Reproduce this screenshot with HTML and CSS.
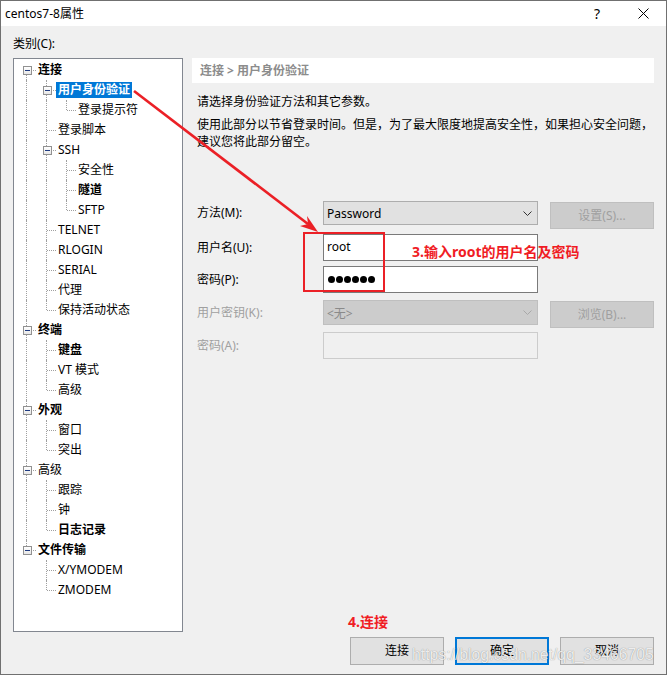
FILE: index.html
```html
<!DOCTYPE html>
<html>
<head>
    <meta charset="UTF-8">
    <title>centos7-8属性</title>
    <link rel="stylesheet" href="styles.css">
</head>
<body>
<div class="window">
    <div class="titlebar">
        <span class="title">centos7-8属性</span>
        <span class="tb-btn help">?</span>
        <span class="tb-btn">
            <svg width="11" height="11" viewBox="0 0 11 11"><path d="M0.5 0.5 L10.5 10.5 M10.5 0.5 L0.5 10.5" stroke="#000" stroke-width="1" fill="none"/></svg>
        </span>
    </div>

    <div class="main">
        <div class="left">
            <div class="cat-label">类别(C):</div>
            <div class="tree">
                <div class="r"><i class="s"><b class="box"></b></i><span class="bd">连接</span></div>
                <div class="r"><i class="p"></i><i class="t"><b class="box"></b></i><span class="bd sel">用户身份验证</span></div>
                <div class="r"><i class="p"></i><i class="p"></i><i class="e"></i><span>登录提示符</span></div>
                <div class="r"><i class="p"></i><i class="t"></i><span>登录脚本</span></div>
                <div class="r"><i class="p"></i><i class="t"><b class="box"></b></i><span>SSH</span></div>
                <div class="r"><i class="p"></i><i class="p"></i><i class="t"></i><span>安全性</span></div>
                <div class="r"><i class="p"></i><i class="p"></i><i class="t"></i><span class="bd">隧道</span></div>
                <div class="r"><i class="p"></i><i class="p"></i><i class="e"></i><span>SFTP</span></div>
                <div class="r"><i class="p"></i><i class="t"></i><span>TELNET</span></div>
                <div class="r"><i class="p"></i><i class="t"></i><span>RLOGIN</span></div>
                <div class="r"><i class="p"></i><i class="t"></i><span>SERIAL</span></div>
                <div class="r"><i class="p"></i><i class="t"></i><span>代理</span></div>
                <div class="r"><i class="p"></i><i class="e"></i><span>保持活动状态</span></div>
                <div class="r"><i class="t"><b class="box"></b></i><span class="bd">终端</span></div>
                <div class="r"><i class="p"></i><i class="t"></i><span class="bd">键盘</span></div>
                <div class="r"><i class="p"></i><i class="t"></i><span>VT 模式</span></div>
                <div class="r"><i class="p"></i><i class="e"></i><span>高级</span></div>
                <div class="r"><i class="t"><b class="box"></b></i><span class="bd">外观</span></div>
                <div class="r"><i class="p"></i><i class="t"></i><span>窗口</span></div>
                <div class="r"><i class="p"></i><i class="e"></i><span>突出</span></div>
                <div class="r"><i class="t"><b class="box"></b></i><span>高级</span></div>
                <div class="r"><i class="p"></i><i class="t"></i><span>跟踪</span></div>
                <div class="r"><i class="p"></i><i class="t"></i><span>钟</span></div>
                <div class="r"><i class="p"></i><i class="e"></i><span class="bd">日志记录</span></div>
                <div class="r"><i class="e"><b class="box"></b></i><span class="bd">文件传输</span></div>
                <div class="r"><i></i><i class="t"></i><span>X/YMODEM</span></div>
                <div class="r"><i></i><i class="e"></i><span>ZMODEM</span></div>
            </div>
        </div>

        <div class="right">
            <div class="crumb">连接 &gt; 用户身份验证</div>
            <div class="desc">
                <p class="first">请选择身份验证方法和其它参数。</p>
                <p>使用此部分以节省登录时间。但是，为了最大限度地提高安全性，如果担心安全问题，建议您将此部分留空。</p>
            </div>

            <div class="form">
                <div class="row row1">
                    <label class="h24">方法(M):</label>
                    <div class="combo">
                        <span>Password</span>
                        <svg width="9" height="5" viewBox="0 0 9 5"><path d="M0.5 0.5 L4.5 4.5 L8.5 0.5" stroke="#333" fill="none"/></svg>
                    </div>
                    <div class="side-btn">设置(S)...</div>
                </div>
                <div class="row row2">
                    <label class="h27">用户名(U):</label>
                    <div class="field">root</div>
                </div>
                <div class="row row3">
                    <label class="h27">密码(P):</label>
                    <div class="field dots"><i></i><i></i><i></i><i></i><i></i><i></i></div>
                </div>
                <div class="row row4">
                    <label class="h25 off">用户密钥(K):</label>
                    <div class="combo off">
                        <span>&lt;无&gt;</span>
                        <svg width="9" height="5" viewBox="0 0 9 5"><path d="M0.5 0.5 L4.5 4.5 L8.5 0.5" stroke="#a8a8a8" fill="none"/></svg>
                    </div>
                    <div class="side-btn">浏览(B)...</div>
                </div>
                <div class="row row5">
                    <label class="h27 off">密码(A):</label>
                    <div class="field off"></div>
                </div>
            </div>
        </div>
    </div>

    <div class="footer">
        <div class="btn">连接</div>
        <div class="btn default">确定</div>
        <div class="btn">取消</div>
    </div>

    <!-- 标注 -->
    <svg class="marks" width="667" height="675" viewBox="0 0 667 675">
        <path d="M134 91 L308 224" stroke="#eb2026" stroke-width="2.6" fill="none"/>
        <path d="M318 232 L300 226 L308 224 L307 216 Z" fill="#eb2026"/>
        <rect x="304" y="233" width="80" height="58" stroke="#eb2026" stroke-width="2" fill="none"/>
    </svg>
    <div class="note note3">3.输入root的用户名及密码</div>
    <div class="note note4">4.连接</div>
    <div class="watermark">https://blog.csdn.net/qq_33466705</div>
</div>
</body>
</html>
```

FILE: styles.css
```css
body {
    margin: 0;
    background: #fff;
    font-family: "Noto Sans", "Noto Sans CJK SC", sans-serif;
    font-size: 12px;
    color: #000;
}
.window {
    position: relative;
    width: 667px;
    height: 675px;
    box-sizing: border-box;
    border: 1px solid #707070;
    background: #f0f0f0;
    overflow: hidden;
}
.titlebar {
    height: 25px;
    background: #fff;
    display: flex;
    align-items: center;
}
.title {
    flex: 1;
    padding-left: 4px;
    line-height: 25px;
}
.tb-btn {
    width: 46px;
    height: 25px;
    display: flex;
    align-items: center;
    justify-content: center;
}
.help {
    font-size: 14px;
}

.main {
    display: flex;
    gap: 9px;
    padding: 0 12px;
}
.left {
    width: 170px;
    flex: none;
}
.cat-label {
    margin: 10px 0 6px;
    line-height: 16px;
}
.tree {
    width: 170px;
    height: 574px;
    box-sizing: border-box;
    border: 1px solid #828790;
    background: #fff;
    padding: 1px 0 0 2px;
}
.tree .r {
    display: flex;
    align-items: center;
    height: 20px;
}
.r i {
    position: relative;
    flex: none;
    width: 20px;
    height: 20px;
}
.r i.p::before,
.r i.t::before,
.r i.e::before,
.r i.s::before {
    content: "";
    position: absolute;
    left: 10px;
    top: 0;
    bottom: 0;
    border-left: 1px dotted #a0a0a0;
}
.r i.e::before { bottom: 10px; }
.r i.s::before { top: 10px; }
.r i.t::after,
.r i.e::after,
.r i.s::after {
    content: "";
    position: absolute;
    left: 11px;
    right: 0;
    top: 10px;
    border-top: 1px dotted #a0a0a0;
}
.r .box {
    position: absolute;
    z-index: 1;
    left: 7px;
    top: 6px;
    width: 9px;
    height: 9px;
    box-sizing: border-box;
    border: 1px solid #919191;
    background: linear-gradient(#fff, #e6e6e6);
}
.r .box::after {
    content: "";
    position: absolute;
    left: 1px;
    top: 3px;
    width: 5px;
    height: 1px;
    background: #1e3a80;
}
.r span {
    padding: 0 2px;
    line-height: 16px;
    white-space: nowrap;
}
.r .bd { font-weight: bold; }
.r .sel {
    background: #0078d7;
    color: #fff;
}

.right {
    width: 462px;
    flex: none;
    padding-top: 32px;
}
.crumb {
    height: 25px;
    line-height: 25px;
    padding-left: 8px;
    background: #fff;
    color: #8c8c8c;
    font-weight: bold;
}
.desc {
    width: 457px;
    margin: 10px 0 0 5px;
    line-height: 17px;
}
.desc p { margin: 0; }
.desc .first { margin-bottom: 6px; }

.form {
    margin-top: 51px;
    padding-left: 5px;
}
.row {
    display: flex;
    align-items: flex-start;
}
.row1 { height: 33px; }
.row2 { height: 32px; }
.row3 { height: 34px; }
.row4 { height: 32px; }
.row5 { height: 27px; }
.row label {
    width: 126px;
    flex: none;
}
.h24 { line-height: 24px; }
.h25 { line-height: 25px; }
.h27 { line-height: 27px; }
.off { color: #a0a0a0; }

.combo {
    width: 215px;
    height: 24px;
    box-sizing: border-box;
    border: 1px solid #adadad;
    background: #e1e1e1;
    display: flex;
    align-items: center;
    justify-content: space-between;
    padding: 0 5px 0 3px;
}
.combo.off {
    height: 25px;
    border-color: #bfbfbf;
    background: #cccccc;
    color: #8a8a8a;
}
.side-btn {
    width: 104px;
    height: 27px;
    box-sizing: border-box;
    margin: 1px 0 0 12px;
    border: 1px solid #bfbfbf;
    background: #cccccc;
    color: #a0a0a0;
    text-align: center;
    line-height: 25px;
}
.field {
    width: 215px;
    height: 27px;
    box-sizing: border-box;
    border: 1px solid #7a7a7a;
    background: #fff;
    padding-left: 3px;
    line-height: 24px;
}
.field.off {
    border-color: #cccccc;
    background: #f0f0f0;
}
.dots {
    display: flex;
    align-items: center;
    gap: 1px;
    padding-left: 4px;
}
.dots i {
    width: 7px;
    height: 7px;
    border-radius: 50%;
    background: #000;
}

.footer {
    display: flex;
    justify-content: flex-end;
    gap: 11px;
    margin-top: 5px;
    padding-right: 12px;
}
.btn {
    width: 94px;
    height: 28px;
    box-sizing: border-box;
    border: 1px solid #adadad;
    background: #e1e1e1;
    text-align: center;
    line-height: 26px;
}
.btn.default {
    border: 2px solid #0078d7;
    line-height: 24px;
}

.marks {
    position: absolute;
    left: -1px;
    top: -1px;
    pointer-events: none;
}
.note {
    position: absolute;
    color: #f01c24;
    font-weight: bold;
    font-size: 14px;
    line-height: 18px;
    white-space: nowrap;
}
.note3 {
    left: 411px;
    top: 242px;
}
.note4 {
    left: 347px;
    top: 612px;
}
.watermark {
    position: absolute;
    left: 411px;
    top: 644px;
    font-family: "Liberation Sans", sans-serif;
    font-size: 15.75px;
    line-height: 20px;
    color: rgba(255, 255, 255, 0.85);
    text-shadow: 0 0 1px rgba(0, 0, 0, 0.45);
    white-space: nowrap;
}
```
